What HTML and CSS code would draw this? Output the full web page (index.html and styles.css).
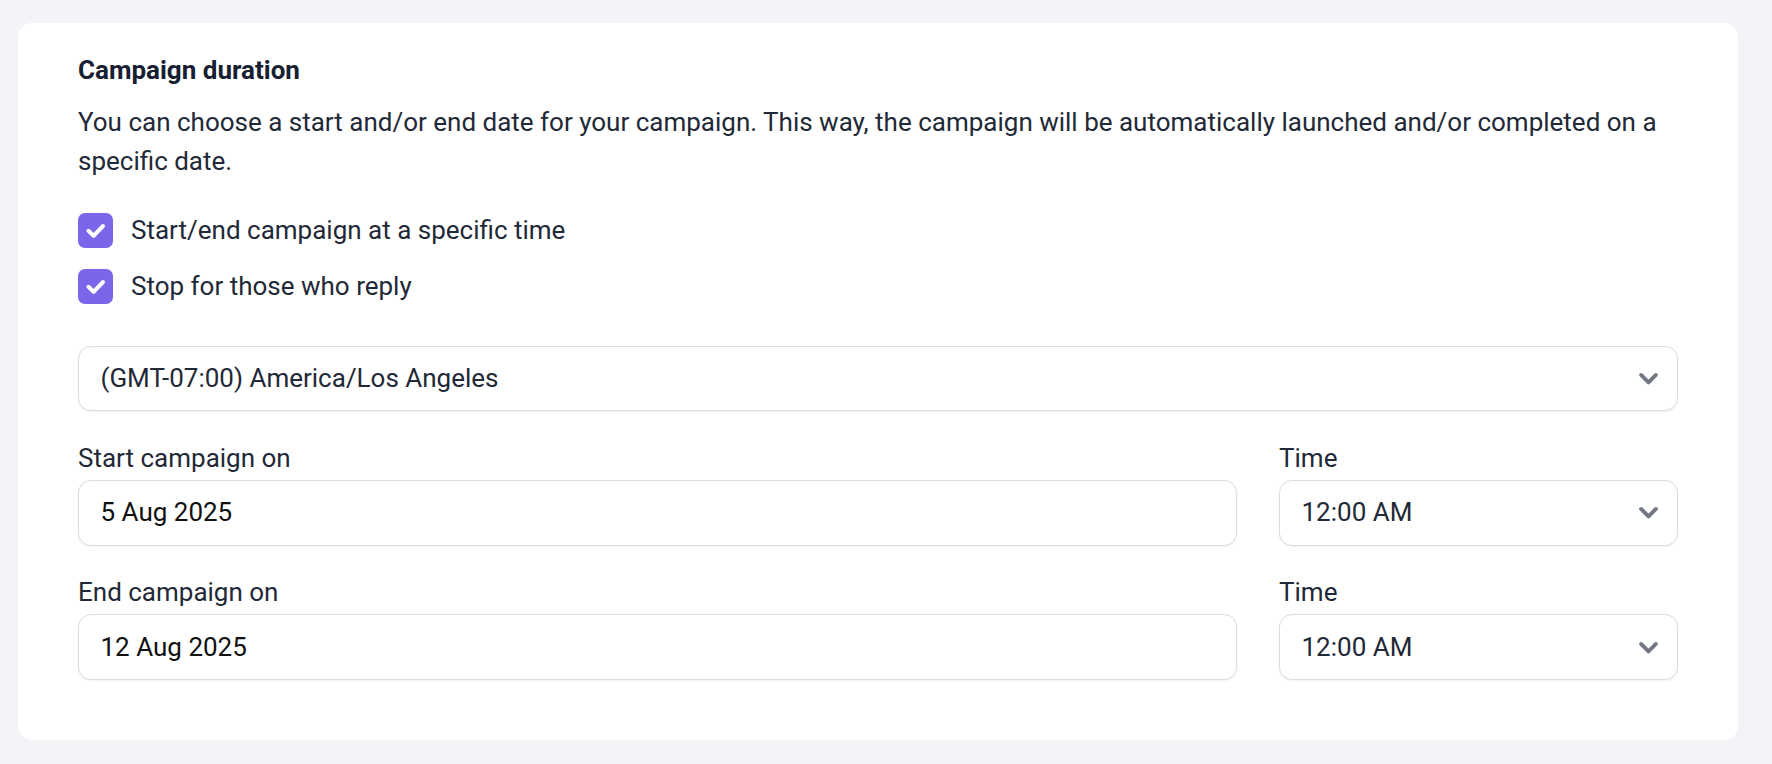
FILE: index.html
```html
<!DOCTYPE html>
<html lang="en">
<head>
<meta charset="utf-8">
<title>Campaign duration</title>
<link rel="stylesheet" href="styles.css">
</head>
<body>
  <section class="card">
    <h2 class="title">Campaign duration</h2>
    <p class="desc">You can choose a start and/or end date for your campaign. This way, the campaign will be automatically launched and/or completed on a specific date.</p>

    <div class="checks">
      <label class="check">
        <span class="box"><svg viewBox="0 0 35 35" width="35" height="35"><polyline points="10.5,17.8 15.6,22.8 25,13" fill="none" stroke="#fff" stroke-width="4" stroke-linecap="round" stroke-linejoin="round"/></svg></span>
        <span class="check-text">Start/end campaign at a specific time</span>
      </label>
      <label class="check">
        <span class="box"><svg viewBox="0 0 35 35" width="35" height="35"><polyline points="10.5,17.8 15.6,22.8 25,13" fill="none" stroke="#fff" stroke-width="4" stroke-linecap="round" stroke-linejoin="round"/></svg></span>
        <span class="check-text">Stop for those who reply</span>
      </label>
    </div>

    <div class="field select tz">
      <span class="value">(GMT-07:00) America/Los Angeles</span>
      <svg class="chev" viewBox="0 0 20 20" width="39" height="39"><path d="M6.2 8.2l3.8 3.8 3.8-3.8" fill="none" stroke="#717783" stroke-width="2" stroke-linecap="round" stroke-linejoin="round"/></svg>
    </div>

    <div class="row">
      <div class="col">
        <div class="label">Start campaign on</div>
        <div class="field"><span class="value date">5 Aug 2025</span></div>
      </div>
      <div class="col">
        <div class="label">Time</div>
        <div class="field select">
          <span class="value">12:00 AM</span>
          <svg class="chev" viewBox="0 0 20 20" width="39" height="39"><path d="M6.2 8.2l3.8 3.8 3.8-3.8" fill="none" stroke="#717783" stroke-width="2" stroke-linecap="round" stroke-linejoin="round"/></svg>
        </div>
      </div>
    </div>

    <div class="row">
      <div class="col">
        <div class="label">End campaign on</div>
        <div class="field"><span class="value date">12 Aug 2025</span></div>
      </div>
      <div class="col">
        <div class="label">Time</div>
        <div class="field select">
          <span class="value">12:00 AM</span>
          <svg class="chev" viewBox="0 0 20 20" width="39" height="39"><path d="M6.2 8.2l3.8 3.8 3.8-3.8" fill="none" stroke="#717783" stroke-width="2" stroke-linecap="round" stroke-linejoin="round"/></svg>
        </div>
      </div>
    </div>
  </section>
</body>
</html>
```

FILE: styles.css
```css
* { box-sizing: border-box; }

html, body {
  margin: 0;
  background: #f3f4f8;
}

body {
  padding: 23px 34px 23px 18px;
  font-family: Roboto, "Liberation Sans", Arial, sans-serif;
  font-size: 26px;
  line-height: 39px;
  color: #1f2937;
}

.card {
  background: #ffffff;
  border-radius: 14px;
  padding: 28px 60px 60px 60px;
}

.title {
  margin: 0;
  font-size: 26px;
  line-height: 39px;
  font-weight: 700;
  color: #172033;
}

.desc {
  margin: 13px 0 0 0;
  color: #1f2937;
}

.checks {
  margin-top: 30px;
  display: flex;
  flex-direction: column;
  gap: 17px;
}

.check {
  display: flex;
  align-items: center;
  gap: 18px;
  height: 39px;
}

.box {
  width: 35px;
  height: 35px;
  border-radius: 7px;
  background: #7b65e9;
  display: flex;
  flex: none;
}

.box svg { display: block; }

.field {
  height: 66px;
  border: 1.5px solid #dcdde2;
  border-radius: 13px;
  background: #fff;
  box-shadow: 0 1px 2px rgba(16, 24, 40, 0.06);
  display: flex;
  align-items: center;
  padding: 0 9px 0 21.5px;
}

.select { justify-content: space-between; }

.tz {
  margin-top: 40px;
  height: 65px;
}

.value { white-space: nowrap; }

.date { color: #111111; }

.chev { display: block; flex: none; }

.row {
  margin-top: 27.5px;
  display: grid;
  grid-template-columns: 1fr 399px;
  column-gap: 42px;
}

.label {
  margin-bottom: 2px;
}
```
